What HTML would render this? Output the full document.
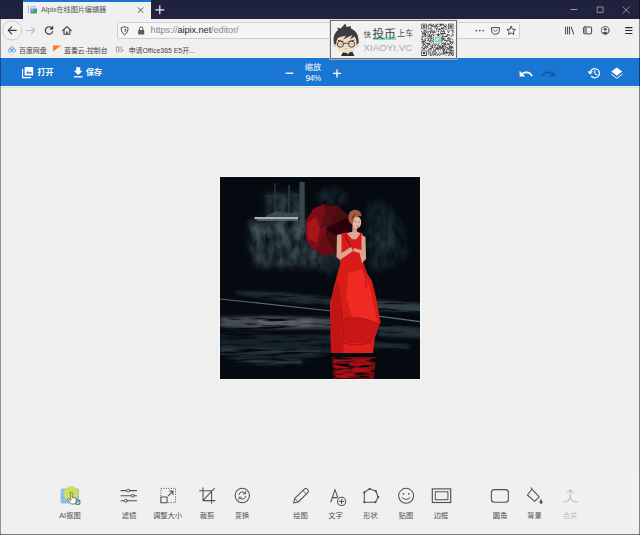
<!DOCTYPE html>
<html lang="zh-CN">
<head>
<meta charset="utf-8">
<title>AIpix在线图片编辑器</title>
<style>
*{box-sizing:border-box;margin:0;padding:0}
html,body{width:640px;height:535px;overflow:hidden;background:#f0f0f0}
body{font-family:"Liberation Sans","Noto Sans CJK SC",sans-serif;color:#333;position:relative}
.abs{position:absolute}
#win{position:absolute;left:0;top:0;width:640px;height:535px;background:#f0f0f0;overflow:hidden}
/* window frame */
#titlebar{left:0;top:0;width:640px;height:18.7px;background:#20223f}
#topline{left:0;top:0;width:640px;height:1px;background:#0d2a2e}
#tab{left:23px;top:0;width:127.5px;height:19px;background:#f0f0f0}
#tabline{left:23px;top:0;width:127.5px;height:1.5px;background:#1a73d9}
#tabtitle{left:41px;top:5px;font-size:7.2px;line-height:10px;color:#555;white-space:nowrap;letter-spacing:-0.1px}
#navbar{left:0;top:18.5px;width:640px;height:23.5px;background:#f0f0f0}
#urlbar{left:116.5px;top:22.2px;width:403px;height:16.8px;background:#f5f5f5;border:1px solid #cfcfd2;border-radius:1.5px}
#url{left:150.6px;top:24.4px;font-size:9.3px;line-height:12px;color:#8a8a8e;white-space:nowrap;letter-spacing:-0.12px}
#url b{font-weight:normal;color:#2a2a2e}
#bookmarks{left:0;top:42px;width:640px;height:16.5px;background:#f0f0f0}
.bm{font-size:6.9px;line-height:10px;color:#444;white-space:nowrap;top:45.5px}
/* app */
#appbar{left:0;top:58.2px;width:640px;height:28.2px;background:#1976d2}
.wt{color:#fff;font-weight:bold;font-size:8px;line-height:10px;white-space:nowrap}
#canvas{left:0;top:86.5px;width:640px;height:384px;background:#efefef}
#tools{left:0;top:470.5px;width:640px;height:63px;background:#f0f0f0}
.lbl{font-size:7.3px;line-height:10px;color:#505056;white-space:nowrap;top:510.8px;width:60px;text-align:center}
#bborder{left:0;top:533.7px;width:640px;height:1.3px;background:#7c7c7c}
#lborder{left:0;top:18.5px;width:1px;height:517px;background:rgba(20,10,30,.42)}
#rborder{left:639px;top:0;width:1px;height:535px;background:rgba(0,0,0,.45)}
svg{position:absolute;overflow:visible}
</style>
</head>
<body>
<div id="win">
<div id="titlebar" class="abs"></div>
<div id="topline" class="abs"></div>
<div id="tab" class="abs"></div>
<div id="tabline" class="abs"></div>
<div id="tabtitle" class="abs">AIpix在线图片编辑器</div>
<div id="navbar" class="abs"></div>
<div id="urlbar" class="abs"></div>
<div id="url" class="abs">https://<b>aipix.net</b>/editor/</div>
<div id="bookmarks" class="abs"></div>
<div class="abs bm" style="left:19px">百度网盘</div>
<div class="abs bm" style="left:64px">蓝奏云-控制台</div>
<div class="abs bm" style="left:128.7px">申请Office365 E5开...</div>
<!-- CHROME-START -->
<svg id="chromeicons" style="left:0;top:0" width="640" height="60" viewBox="0 0 640 60" fill="none" stroke-linecap="round" stroke-linejoin="round">
<!-- favicon -->
<g>
<rect x="30.5" y="8.5" width="6.5" height="4.8" fill="#3f8fd8" stroke="none"/>
<path d="M30.5 13.3 L33 11 L34.5 12 L37 10.5 L37 13.3Z" fill="#49b04a" stroke="none"/>
<rect x="31.5" y="9.3" width="1.6" height="1.4" fill="#f5d040" stroke="none"/>
<path d="M28.5 6.5 V13" stroke="#8a93c8" stroke-width="0.8" stroke-dasharray="1 1"/>
<path d="M30.5 6.8 H36" stroke="#8a93c8" stroke-width="0.8" stroke-dasharray="1 1"/>
</g>
<!-- tab close -->
<path d="M138.2 7.7 L143 12.5 M143 7.7 L138.2 12.5" stroke="#4a4a50" stroke-width="0.9"/>
<!-- new tab plus -->
<path d="M155.8 9.8 H163.8 M159.8 5.8 V13.8" stroke="#f0f0f4" stroke-width="1.2"/>
<!-- window controls -->
<path d="M571 9.5 H577" stroke="#a6a6ae" stroke-width="0.9"/>
<rect x="597.6" y="7" width="5.4" height="5.4" stroke="#9c9c98" stroke-width="0.9"/>
<path d="M623 6.8 L629.4 13.2 M629.4 6.8 L623 13.2" stroke="#b0b0ba" stroke-width="0.75"/>
<!-- back -->
<circle cx="12.2" cy="30.4" r="9.6" stroke="#c4c0c8" stroke-width="0.8" fill="#f2f2f2"/>
<path d="M16.2 30.4 H8.4 M11.6 27 L8.2 30.4 L11.6 33.8" stroke="#3a3a40" stroke-width="1.15"/>
<!-- forward -->
<path d="M26.6 30.4 H34.4 M31.2 27 L34.6 30.4 L31.2 33.8" stroke="#b9b6be" stroke-width="1.05"/>
<!-- reload -->
<path d="M52.3 28.6 A3.7 3.7 0 1 0 52.6 31.6" stroke="#3a3a40" stroke-width="1.15"/>
<path d="M52.9 26.4 V29.2 H50.1Z" fill="#3a3a40" stroke="#3a3a40" stroke-width="0.6"/>
<!-- home -->
<path d="M62.6 30.6 L66.9 26.6 L71.2 30.6" stroke="#3a3a40" stroke-width="1.15"/>
<path d="M64 30 V34.3 H69.8 V30" stroke="#3a3a40" stroke-width="1.1"/>
<rect x="66.2" y="31.6" width="1.5" height="2.6" fill="#3a3a40" stroke="none"/>
<!-- shield -->
<path d="M124.6 26.6 C123 27.4 122 27.5 121.2 27.5 C121.2 31 122 33.4 124.6 34.8 C127.2 33.4 128 31 128 27.5 C127.2 27.5 126.2 27.4 124.6 26.6Z" stroke="#4a4a50" stroke-width="0.95"/>
<path d="M124.6 28.6 V32.6 C125.8 31.8 126.3 30.4 126.3 28.9Z" fill="#6a6a70" stroke="none"/>
<!-- lock -->
<rect x="138.2" y="30" width="6" height="4.6" rx="0.5" fill="#5a5a60" stroke="none"/>
<path d="M139.5 30 V28.6 A1.7 1.7 0 0 1 142.9 28.6 V30" stroke="#5a5a60" stroke-width="1"/>
<!-- dots -->
<circle cx="476.4" cy="30.6" r="0.85" fill="#4a4a50"/><circle cx="479.8" cy="30.6" r="0.85" fill="#4a4a50"/><circle cx="483.2" cy="30.6" r="0.85" fill="#4a4a50"/>
<!-- pocket -->
<path d="M491.6 27.6 H499.4 V30.4 A3.9 3.9 0 0 1 491.6 30.4Z" stroke="#4a4a50" stroke-width="1"/>
<path d="M493.6 29.8 L495.5 31.6 L497.4 29.8" stroke="#4a4a50" stroke-width="0.9"/>
<!-- star -->
<path d="M511.2 26.4 L512.5 29.2 L515.5 29.5 L513.3 31.5 L513.9 34.5 L511.2 33 L508.5 34.5 L509.1 31.5 L506.9 29.5 L509.9 29.2Z" stroke="#3a3a40" stroke-width="0.9"/>
<!-- library -->
<path d="M565.6 27 V34 M567.6 27 V34 M569.6 27 V34 M571.4 27.3 L573.6 34" stroke="#3a3a40" stroke-width="0.95"/>
<!-- sidebar -->
<rect x="583.6" y="27" width="8" height="6.8" rx="0.8" stroke="#3a3a40" stroke-width="0.95"/>
<rect x="584.3" y="27.6" width="2.6" height="5.6" fill="#8a8a90" stroke="none"/>
<!-- account -->
<circle cx="605.2" cy="30.4" r="3.9" stroke="#4a4a50" stroke-width="0.9"/>
<circle cx="605.2" cy="29.3" r="1.4" fill="#4a4a50" stroke="none"/>
<path d="M602.6 33 A2.8 2 0 0 1 607.8 33 A3.9 3.9 0 0 1 602.6 33Z" fill="#4a4a50" stroke="none"/>
<!-- menu -->
<path d="M625.6 27.6 H632 M625.6 30.5 H632 M625.6 33.4 H632" stroke="#2a2a30" stroke-width="1.05"/>
<!-- bookmarks icons -->
<g>
<circle cx="9.9" cy="50.6" r="1.7" stroke="#4ab0f4" stroke-width="1"/>
<circle cx="13.7" cy="50.6" r="1.7" stroke="#4ab0f4" stroke-width="1"/>
<circle cx="11.8" cy="48.4" r="1.7" stroke="#4ab0f4" stroke-width="1"/>
<circle cx="11.8" cy="49.6" r="0.9" fill="#ee6a6a" stroke="none"/>
<path d="M10.6 54.5 H13" stroke="#f0a0b0" stroke-width="0.6"/>
</g>
<path d="M53 45.6 H61.2 L53 51.6Z" fill="#ff7a1a" stroke="none"/>
<path d="M59.5 46.2 L61.6 45.4 L61.6 48" fill="#ffd9b8" stroke="none"/>
<g stroke="#8a8a98" stroke-width="0.7">
<rect x="116.4" y="47" width="2.4" height="5" rx="0.6"/>
<circle cx="121.3" cy="50.4" r="1.6"/>
<path d="M119.6 47.2 H122"/>
</g>
</svg>
<!-- CHROME-END -->
<div id="appbar" class="abs"></div>
<div class="abs wt" style="left:37.5px;top:67.5px">打开</div>
<div class="abs wt" style="left:86px;top:67.5px">保存</div>
<div class="abs wt" style="left:293px;top:62.7px;width:40px;text-align:center;font-size:8.2px;font-weight:normal">缩放</div>
<div class="abs wt" style="left:293px;top:72.7px;width:40px;text-align:center;font-size:8.3px;font-weight:normal;letter-spacing:-0.5px">94%</div>
<!-- APPBAR-START -->
<svg id="appicons" style="left:0;top:58px" width="640" height="30" viewBox="0 58 640 30" fill="none" stroke-linecap="round" stroke-linejoin="round">
<!-- open (photo library) -->
<rect x="24.6" y="67" width="8.6" height="8.6" rx="0.9" fill="#fff"/>
<path d="M26 73.6 L28 71 L29.5 72.8 L30.6 71.6 L32.2 73.6Z" fill="#1976d2"/>
<path d="M22.6 69 V77.6 H31.2" stroke="#fff" stroke-width="1.1" stroke-linecap="butt" stroke-linejoin="miter"/>
<!-- save (download) -->
<path d="M76.2 67.2 H80.2 V70.8 H82.6 L78.2 75 L73.8 70.8 H76.2Z" fill="#fff"/>
<rect x="73.8" y="76.2" width="8.8" height="1.3" fill="#fff"/>
<!-- minus / plus -->
<path d="M285.6 73.2 H293.4" stroke="#fff" stroke-width="1.3" stroke-linecap="butt"/>
<path d="M333 73.4 H341 M337 69.4 V77.4" stroke="#fff" stroke-width="1.3" stroke-linecap="butt"/>
<!-- undo -->
<path d="M520.4 71 L524 70.9 M520.4 71 L520.5 67.6" stroke="none"/>
<path d="M526.6 71.4 C524.6 71.4 523 72 521.8 73 L519.6 70.8 V76.4 H525.2 L523.1 74.3 C524 73.6 525.2 73.2 526.6 73.2 C528.8 73.2 530.4 74.4 531.2 76.4 L532.8 75.9 C531.8 73.2 529.6 71.4 526.6 71.4Z" fill="#fff"/>
<!-- redo -->
<path d="M547.8 71.4 C549.8 71.4 551.4 72 552.6 73 L554.8 70.8 V76.4 H549.2 L551.3 74.3 C550.4 73.6 549.2 73.2 547.8 73.2 C545.6 73.2 544 74.4 543.2 76.4 L541.6 75.9 C542.6 73.2 544.8 71.4 547.8 71.4Z" fill="#1558a6"/>
<!-- history -->
<path d="M590.2 73.2 A4.6 4.6 0 1 1 591.6 76.5" stroke="#fff" stroke-width="1.25"/>
<path d="M588 71.8 L590.2 74.4 L592.4 71.8Z" fill="#fff" stroke="#fff" stroke-width="0.4"/>
<path d="M594.8 70.6 V73.6 L597 74.9" stroke="#fff" stroke-width="1.05"/>
<!-- layers -->
<path d="M616.8 67.4 L622.2 71.6 L616.8 75.8 L611.4 71.6Z" fill="#fff"/>
<path d="M611.4 74.2 L616.8 78.4 L622.2 74.2" stroke="#fff" stroke-width="1" stroke-linejoin="miter"/>
</svg>
<!-- APPBAR-END -->
<div id="canvas" class="abs"></div>
<!-- PHOTO-START -->
<div id="photoframe" class="abs" style="left:219px;top:176px;width:202px;height:204px;background:#f9f9f9"></div>
<svg id="photo" style="left:220px;top:177px" width="200" height="202" viewBox="0 0 200 202">
<defs>
<filter id="b1" x="-30%" y="-30%" width="160%" height="160%"><feGaussianBlur stdDeviation="0.9"/></filter>
<filter id="b2" x="-30%" y="-30%" width="160%" height="160%"><feGaussianBlur stdDeviation="2.2"/></filter>
<filter id="b5" x="-30%" y="-30%" width="160%" height="160%"><feGaussianBlur stdDeviation="5"/></filter>
<filter id="b05" x="-30%" y="-30%" width="160%" height="160%"><feGaussianBlur stdDeviation="0.45"/></filter>
<filter id="mw" x="-20%" y="-20%" width="140%" height="140%"><feGaussianBlur in="SourceGraphic" stdDeviation="3.5" result="bl"/><feTurbulence type="fractalNoise" baseFrequency="0.12 0.07" numOctaves="3" seed="4" result="n"/><feColorMatrix in="n" type="matrix" values="0 0 0 0 0  0 0 0 0 0  0 0 0 0 0  0 0 0 1.8 -0.2" result="na"/><feComposite in="bl" in2="na" operator="in"/></filter>
<filter id="mg" x="-20%" y="-20%" width="140%" height="140%"><feGaussianBlur in="SourceGraphic" stdDeviation="1.6" result="bl"/><feTurbulence type="fractalNoise" baseFrequency="0.025 0.32" numOctaves="3" seed="9" result="n"/><feColorMatrix in="n" type="matrix" values="0 0 0 0 0  0 0 0 0 0  0 0 0 0 0  0 0 0 4 -1.05" result="na"/><feComposite in="bl" in2="na" operator="in"/></filter>
<filter id="mr" x="-20%" y="-20%" width="140%" height="140%"><feGaussianBlur in="SourceGraphic" stdDeviation="0.7" result="bl"/><feTurbulence type="fractalNoise" baseFrequency="0.06 0.35" numOctaves="2" seed="5" result="n"/><feColorMatrix in="n" type="matrix" values="0 0 0 0 0  0 0 0 0 0  0 0 0 0 0  0 0 0 5 -1.7" result="na"/><feComposite in="bl" in2="na" operator="in"/></filter>
<clipPath id="pc"><rect x="0" y="0" width="200" height="202"/></clipPath>
</defs>
<g clip-path="url(#pc)">
<rect x="0" y="0" width="200" height="202" fill="#040a0f"/>
<!-- wall -->
<g filter="url(#mw)">
<rect x="30" y="44" width="76" height="30" fill="#43535a"/>
<rect x="34" y="60" width="84" height="30" fill="#33424a"/>
<rect x="46" y="16" width="36" height="26" fill="#2a3940"/>
<ellipse cx="112" cy="20" rx="14" ry="8" fill="#1c2b32"/>
</g>
<g filter="url(#mw)">
<path d="M150 22 L170 30 L184 52 L186 80 L170 88 L152 96 L146 70 L148 40Z" fill="#17272e"/>
<path d="M152 40 L166 44 L176 62 L168 76 L154 70Z" fill="#1d3038"/>
<path d="M100 80 L118 80 L116 100 L100 96Z" fill="#141f26"/>
</g>
<!-- window -->
<g filter="url(#b05)">
<rect x="54.2" y="6.5" width="1.3" height="34" fill="#2c3a41"/>
<rect x="68.3" y="8" width="1.5" height="33" fill="#2f3e45"/>
<rect x="79.5" y="5" width="5.2" height="46" fill="#38464c"/>
<rect x="46" y="18.5" width="10" height="1" fill="#2a383e"/>
<rect x="70" y="17.5" width="10" height="1" fill="#2a383e"/>
<path d="M46 39 L56 34 L68 36 L79 35 L79 40 L46 40Z" fill="#3a484e"/>
<rect x="34.5" y="40" width="43.5" height="2.2" fill="#a9b2b3"/>
<rect x="37" y="42.2" width="41" height="1.6" fill="#56656a"/>
</g>
<!-- ground -->
<g filter="url(#mg)">
<path d="M16 114 L60 115 L112 121 L112 130 L60 124 L16 117Z" fill="#222d33"/>
<path d="M0 140 L40 139 L112 141 L112 152 L40 152 L0 150Z" fill="#444c52"/>
<path d="M38 141 L92 142 L92 149 L38 149Z" fill="#5a6166"/>
<path d="M0 156 L112 158 L112 176 L60 190 L20 186 L0 178Z" fill="#19232a"/>
<path d="M0 171 L100 174 L100 177 L0 175Z" fill="#2d393f"/>
<path d="M18 181 L82 183 L82 188 L18 186Z" fill="#25323a"/>
<path d="M155 123 L204 127 L204 136 L155 133Z" fill="#333f45"/>
<path d="M158 147 L204 151 L204 161 L158 159Z" fill="#273238"/>
<path d="M152 165 L190 167.5 L190 172.5 L152 171Z" fill="#222d33"/>
</g>
<g filter="url(#b05)">
<path d="M0 121.4 L112 133.4 L112 134.5 L0 122.5Z" fill="#5c676e"/>
<path d="M158 138.6 L200 144.1 L200 145.2 L158 139.7Z" fill="#626d74"/>
</g>
<!-- umbrella -->
<g filter="url(#b05)">
<path d="M86 44 L93 32 L104 27 L118 29 L128 38 L131 52 L128 66 L118 76 L104 78 L92 72 L86 62Z" fill="#480710"/>
<path d="M86 44 L93 32 L104 27 L108 40 L106 52 L104 78 L92 72 L86 62Z" fill="#7c0d17"/>
<path d="M87 46 L96 40 L100 52 L97 66 L88 62Z" fill="#a8141d"/>
<path d="M100 52 L106 30 L118 30 L112 46Z" fill="#5a0912"/>
<path d="M106 52 L128 40 L131 52 L128 66Z" fill="#2c0409"/>
<path d="M96 74 L104 56 L116 76 L104 79Z" fill="#650a13"/>
</g>
<!-- figure -->
<g filter="url(#b05)">
<!-- reflection -->
<g filter="url(#mr)"><path d="M112 180 L156 180 L154 202 L113 202Z" fill="#7a0a0e"/>
<path d="M114 183 L150 182 L152 194 L138 196 L128 202 L116 200Z" fill="#b01014"/></g>
<!-- skirt -->
<path d="M121 84 L143 84 L147 96 L152 104 L156 120 L160.5 145 L155 160 L153 176 L111 176 L110.5 150 L110 126 L116 102Z" fill="#d81b18"/>
<path d="M128 96 L142 92 L150 110 L154 130 L158 146 L146 142 L132 140 L126 120Z" fill="#ee2a21"/>
<path d="M124 142 L146 142 L159 148 L155 160 L150 166 L130 168 L122 160Z" fill="#c91614"/>
<path d="M124 166 L150 166 L153 176 L122 176Z" fill="#e0201b"/>
<path d="M110.5 150 L112 120 L118 104 L122 130 L121 176 L111 176Z" fill="#c21513"/>
<path d="M121 130 L123.4 150 L122.4 176" stroke="#9c100f" stroke-width="0.8" fill="none"/>
<path d="M124 142 Q140 138 159 147" stroke="#a81210" stroke-width="0.9" fill="none"/>
<path d="M124 166 Q138 170 151 165" stroke="#a81210" stroke-width="0.8" fill="none"/>
<path d="M143 88 Q147 100 146 112" stroke="#a81210" stroke-width="0.8" fill="none"/>
<!-- bodice -->
<path d="M121.4 56.4 L127 55.6 L140.4 55.6 L143 56.4 L144 70 L143 86 L120 86 L120.5 70Z" fill="#d81e1b"/>
<!-- arms -->
<path d="M117 58 L121.5 57 L121.5 76 L131 70 L133 74 L120 83 L116.5 80Z" fill="#dba68e"/>
<path d="M141.5 58 L145.5 60 L146 82 L142 86 L139.5 76 L133 74 L134 71 L141.5 73Z" fill="#d9a48c"/>
<!-- neck, head -->
<rect x="132.4" y="49" width="4.6" height="7" fill="#cf9a84"/>
<path d="M127 56.6 L132.4 54.4 L137 54.4 L140.4 56.6 L136.4 62.2 L132 62.2Z" fill="#dba890"/>
<ellipse cx="129.6" cy="40.6" rx="2.6" ry="3" fill="#2a1716"/>
<ellipse cx="136.6" cy="45.4" rx="4.6" ry="6.2" fill="#e4b6a0"/>
<path d="M128.4 40.6 Q128.6 32.6 135.6 32.8 Q141.6 33.4 141.4 39.6 Q138 37.6 134.6 40.2 Q133.6 44.6 132.2 47.4 Q128.6 46 128.4 40.6Z" fill="#a25a3c"/>
<path d="M132.2 41 Q133 37.4 136 36.6 Q133.6 38.8 133.4 42Z" fill="#6e3322"/>
<circle cx="135.6" cy="44.8" r="0.55" fill="#5a382e"/><circle cx="139.2" cy="45" r="0.55" fill="#5a382e"/>
<rect x="136.6" y="49.2" width="2" height="0.8" fill="#b8443c"/>
<path d="M124.6 58 L131 70" stroke="#5a0a0e" stroke-width="0.8" fill="none"/>
</g>
</g>
</svg>
<!-- PHOTO-END -->
<div id="tools" class="abs"></div>
<div class="abs" style="left:1px;top:86.6px;width:638px;height:0.8px;background:rgba(120,90,140,.12)"></div>
<div class="abs lbl" style="left:40px">AI抠图</div>
<div class="abs lbl" style="left:99px">滤镜</div>
<div class="abs lbl" style="left:137.5px">调整大小</div>
<div class="abs lbl" style="left:177px">裁剪</div>
<div class="abs lbl" style="left:212px">变换</div>
<div class="abs lbl" style="left:270.5px">绘图</div>
<div class="abs lbl" style="left:305.5px">文字</div>
<div class="abs lbl" style="left:340.5px">形状</div>
<div class="abs lbl" style="left:376px">贴图</div>
<div class="abs lbl" style="left:411px">边框</div>
<div class="abs lbl" style="left:470px">圆角</div>
<div class="abs lbl" style="left:504.5px">背景</div>
<div class="abs lbl" style="left:540px;color:#bbb">合并</div>
<!-- TOOL-START -->
<svg id="toolicons" style="left:0;top:480px" width="640" height="30" viewBox="0 480 640 30" fill="none" stroke="#505058" stroke-width="1" stroke-linecap="round" stroke-linejoin="round">
<!-- AI cutout -->
<rect x="60.6" y="488.6" width="18.4" height="14.8" rx="1.6" fill="#8cbfe6" stroke="none"/>
<circle cx="77.7" cy="502.2" r="2.3" fill="none" stroke="#3f9a3a" stroke-width="1.2"/>
<circle cx="71" cy="493.4" r="7.4" fill="#cfe05a" fill-opacity="0.92" stroke="none"/>
<path d="M70.6 492.4 h1.5 v5 l3.2 0.6 q1.2 0.4 1 1.8 l-0.5 3 q-0.3 1.2 -1.6 1.2 h-2.4 q-1 0 -1.7 -1 l-2.6 -3.6 q0.7 -1 1.8 -0.2 l1.3 1Z" fill="#fff" stroke="#44444a" stroke-width="0.7"/>
<rect x="70.8" y="492.6" width="1.2" height="4.6" fill="#e8d84a" stroke="none"/>
<!-- filter -->
<path d="M121 490.6 H136.6 M121 495.7 H136.6 M121 500.8 H136.6" stroke-width="1.05"/>
<circle cx="128.2" cy="490.6" r="1.5" fill="#f0f0f0" stroke-width="0.9"/>
<circle cx="132.8" cy="495.7" r="1.5" fill="#f0f0f0" stroke-width="0.9"/>
<circle cx="125.8" cy="500.8" r="1.5" fill="#f0f0f0" stroke-width="0.9"/>
<!-- resize -->
<rect x="160.9" y="488.4" width="14.6" height="14.2" stroke-dasharray="1 1.5" stroke-linecap="butt" stroke-width="1"/>
<rect x="160.9" y="496.9" width="6.2" height="5.8" fill="#f0f0f0" stroke-width="1.05"/>
<path d="M168.2 495.8 L172.8 491.2 M169.4 491 H173 V494.6" stroke-width="1.05"/>
<!-- crop -->
<path d="M203 487.8 V500.6 H215 M199.6 490.7 H211.6 V503.2 M203.4 500.2 L214.4 488.3" stroke-width="1.05"/>
<!-- transform -->
<circle cx="242.3" cy="495.5" r="7.2" stroke-width="1.05"/>
<path d="M239 494.6 A3.4 3.4 0 0 1 245.2 493.4 M245.6 496.4 A3.4 3.4 0 0 1 239.4 497.6" stroke-width="1"/>
<path d="M245.6 491.6 V493.8 H243.4 M239 499.4 V497.2 H241.2" stroke-width="0.9"/>
<!-- pencil -->
<path d="M293.6 503 L294.8 498.4 L304.6 488.8 Q305.8 487.8 307 489 L308 490 Q309 491.2 308 492.4 L298.2 502 Z" stroke-width="1.05"/>
<path d="M294.8 498.6 L298 501.8 M303 490.6 L306.2 493.8" stroke-width="0.9"/>
<!-- text -->
<path d="M330.8 502 L335 489.6 L337.6 497.2 M332.4 497.6 H337" stroke-width="1.05"/>
<circle cx="341.6" cy="501.4" r="4.1" fill="#f0f0f0" stroke-width="1.05"/>
<path d="M339.4 501.4 H343.8 M341.6 499.2 V503.6" stroke-width="1"/>
<!-- shape -->
<path d="M369.7 488.8 L375.9 491.2 L378.2 497.2 L375.4 502.2 L364.3 502.2 L364.3 492.4Z" stroke-width="1.05"/>
<g fill="#505058" stroke="none"><circle cx="369.7" cy="488.8" r="1.1"/><circle cx="375.9" cy="491.2" r="1.1"/><circle cx="378.2" cy="497.2" r="1.1"/><circle cx="375.4" cy="502.2" r="1.1"/><circle cx="364.3" cy="502.2" r="1.1"/><circle cx="364.3" cy="492.4" r="1.1"/></g>
<!-- sticker -->
<circle cx="406.1" cy="495.8" r="7.5" stroke-width="1.05"/>
<circle cx="403.5" cy="493.8" r="0.85" fill="#505058" stroke="none"/><circle cx="408.8" cy="493.8" r="0.85" fill="#505058" stroke="none"/>
<path d="M402.2 497.6 Q406.1 501.6 410 497.6" stroke-width="1"/>
<!-- frame -->
<rect x="432.3" y="488.9" width="18.4" height="13.6" stroke-width="1.15" stroke-linejoin="miter"/>
<rect x="435.3" y="491.8" width="12.6" height="7.9" stroke-width="1" stroke-linejoin="miter"/>
<!-- rounded -->
<rect x="491.4" y="489.6" width="17" height="12.6" rx="3" stroke-width="1.1"/>
<!-- bucket -->
<path d="M531.9 489.2 L539.2 496.8 L534.6 501.4 L527.4 495 Z M531.2 487.8 L532.4 489.8" stroke-width="1.05"/>
<path d="M541 499.6 Q542.6 501.6 542.4 502.2 A1.4 1.4 0 0 1 539.6 502.2 Q539.6 501.4 541 499.6Z" fill="#505058" stroke-width="0.4"/>
<!-- merge -->
<path d="M570.2 489.8 V495.4 C570.2 499.6 568 501.8 563.4 501.9 M570.2 495.4 C570.2 499.6 572.6 501.8 577.4 501.9 M566.8 493 L570.2 489.6 L573.6 493" stroke="#c3bfcb" stroke-width="1.05"/>
</svg>
<!-- TOOL-END -->
<!-- BANNER-START -->
<div id="banner" class="abs" style="left:329.5px;top:20px;width:127.5px;height:38.5px;background:#f1f1f1;border:1px solid #6e6e72;box-shadow:0 0 0 0.6px #d8d8dc"></div>
<svg id="avatar" style="left:330px;top:20px" width="127" height="39" viewBox="330 20 127 39">
<!-- avatar -->
<path d="M341 56 L343.5 51 L352 51 L354.5 56Z" fill="#2f2f33"/>
<path d="M345.6 51 L347.8 54.4 L350 51Z" fill="#f4f4f4"/>
<ellipse cx="334.6" cy="44.8" rx="1.7" ry="2.4" fill="#efd3b8"/>
<ellipse cx="357.4" cy="44.8" rx="1.7" ry="2.4" fill="#efd3b8"/>
<path d="M336 38 Q336 33 346 33 Q356.4 33 356.4 38 L356.4 45 Q356 52.6 346.2 53 Q336.4 52.6 336 45Z" fill="#f3dcc4"/>
<path d="M333.6 41 Q333 34 338 30 L337.4 27.6 L340.6 28.6 L345.4 23.6 L346.6 27 L350.6 26 L351 28.4 Q358 31 358.6 40 L358.8 43 L356.4 44.6 Q356.8 39 354.6 36.4 L350 39.4 L352.4 35 L343 39.6 L346 35.6 L338.6 37.6 Q336 40 336.2 45 L334 43.4Z" fill="#3e3e42"/>
<path d="M338 40.4 L343.4 41.6 M348.4 41.6 L354.4 40.2" stroke="#37373b" stroke-width="0.9" fill="none"/>
<circle cx="340.4" cy="44.2" r="3" fill="#f7e8d6" stroke="#3a3a3e" stroke-width="1"/>
<circle cx="351.6" cy="44.2" r="3" fill="#f7e8d6" stroke="#3a3a3e" stroke-width="1"/>
<path d="M343.4 43.6 Q346 42.6 348.6 43.6" stroke="#3a3a3e" stroke-width="0.9" fill="none"/>
<path d="M338.8 44.6 Q340.4 43.2 342 44.6 M350 44.6 Q351.6 43.2 353.2 44.6" stroke="#6a5a50" stroke-width="0.6" fill="none"/>
<path d="M345.2 48.4 Q346.2 49.2 347.2 48.4" stroke="#b08a78" stroke-width="0.6" fill="none"/>
<!-- underline -->
<rect x="373" y="37.2" width="23" height="2.8" fill="#86dcae"/>
<!-- qr -->
<rect x="421" y="23.6" width="32.8" height="32.2" fill="#f4f4f4"/>
<g transform="translate(421.3 23.7) scale(0.7854)"><path fill="#46464c" d="M0 0h7v1h-7zM10 0h3v1h-3zM15 0h1v1h-1zM20 0h2v1h-2zM23 0h6v1h-6zM34 0h7v1h-7zM0 1h1v1h-1zM6 1h1v1h-1zM9 1h2v1h-2zM12 1h1v1h-1zM14 1h2v1h-2zM18 1h3v1h-3zM23 1h4v1h-4zM28 1h1v1h-1zM30 1h2v1h-2zM34 1h1v1h-1zM40 1h1v1h-1zM0 2h1v1h-1zM2 2h3v1h-3zM6 2h1v1h-1zM8 2h2v1h-2zM11 2h4v1h-4zM16 2h1v1h-1zM18 2h2v1h-2zM24 2h2v1h-2zM28 2h2v1h-2zM32 2h1v1h-1zM34 2h1v1h-1zM36 2h3v1h-3zM40 2h1v1h-1zM0 3h1v1h-1zM2 3h3v1h-3zM6 3h1v1h-1zM8 3h1v1h-1zM12 3h1v1h-1zM14 3h7v1h-7zM22 3h2v1h-2zM29 3h3v1h-3zM34 3h1v1h-1zM36 3h3v1h-3zM40 3h1v1h-1zM0 4h1v1h-1zM2 4h3v1h-3zM6 4h1v1h-1zM8 4h1v1h-1zM12 4h1v1h-1zM17 4h1v1h-1zM20 4h1v1h-1zM25 4h1v1h-1zM28 4h1v1h-1zM30 4h1v1h-1zM32 4h1v1h-1zM34 4h1v1h-1zM36 4h3v1h-3zM40 4h1v1h-1zM0 5h1v1h-1zM6 5h1v1h-1zM9 5h1v1h-1zM11 5h2v1h-2zM16 5h1v1h-1zM18 5h2v1h-2zM25 5h6v1h-6zM34 5h1v1h-1zM40 5h1v1h-1zM0 6h7v1h-7zM9 6h3v1h-3zM13 6h1v1h-1zM19 6h5v1h-5zM25 6h3v1h-3zM32 6h1v1h-1zM34 6h7v1h-7zM8 7h1v1h-1zM13 7h1v1h-1zM19 7h1v1h-1zM22 7h3v1h-3zM28 7h1v1h-1zM30 7h1v1h-1zM32 7h1v1h-1zM3 8h2v1h-2zM6 8h1v1h-1zM12 8h2v1h-2zM16 8h1v1h-1zM21 8h1v1h-1zM25 8h1v1h-1zM28 8h1v1h-1zM33 8h1v1h-1zM35 8h1v1h-1zM38 8h3v1h-3zM0 9h1v1h-1zM3 9h3v1h-3zM8 9h1v1h-1zM10 9h3v1h-3zM14 9h2v1h-2zM17 9h1v1h-1zM19 9h1v1h-1zM21 9h2v1h-2zM24 9h3v1h-3zM28 9h2v1h-2zM36 9h1v1h-1zM40 9h1v1h-1zM0 10h1v1h-1zM2 10h1v1h-1zM5 10h2v1h-2zM8 10h2v1h-2zM11 10h1v1h-1zM13 10h2v1h-2zM16 10h2v1h-2zM21 10h1v1h-1zM26 10h4v1h-4zM33 10h3v1h-3zM39 10h2v1h-2zM1 11h1v1h-1zM3 11h2v1h-2zM6 11h1v1h-1zM8 11h1v1h-1zM11 11h2v1h-2zM14 11h3v1h-3zM18 11h1v1h-1zM24 11h1v1h-1zM29 11h1v1h-1zM34 11h1v1h-1zM40 11h1v1h-1zM1 12h5v1h-5zM8 12h1v1h-1zM11 12h1v1h-1zM15 12h1v1h-1zM21 12h1v1h-1zM24 12h7v1h-7zM39 12h1v1h-1zM1 13h1v1h-1zM3 13h3v1h-3zM8 13h1v1h-1zM10 13h1v1h-1zM13 13h2v1h-2zM17 13h1v1h-1zM19 13h5v1h-5zM25 13h1v1h-1zM28 13h1v1h-1zM31 13h1v1h-1zM33 13h2v1h-2zM36 13h1v1h-1zM40 13h1v1h-1zM3 14h1v1h-1zM5 14h3v1h-3zM9 14h2v1h-2zM12 14h2v1h-2zM15 14h1v1h-1zM21 14h2v1h-2zM26 14h2v1h-2zM33 14h2v1h-2zM38 14h3v1h-3zM0 15h1v1h-1zM2 15h1v1h-1zM4 15h2v1h-2zM9 15h4v1h-4zM15 15h2v1h-2zM20 15h3v1h-3zM24 15h1v1h-1zM27 15h1v1h-1zM31 15h3v1h-3zM35 15h2v1h-2zM40 15h1v1h-1zM1 16h2v1h-2zM4 16h2v1h-2zM8 16h3v1h-3zM12 16h2v1h-2zM26 16h7v1h-7zM38 16h1v1h-1zM0 17h2v1h-2zM8 17h1v1h-1zM11 17h2v1h-2zM15 17h1v1h-1zM25 17h2v1h-2zM34 17h1v1h-1zM5 18h3v1h-3zM10 18h5v1h-5zM26 18h5v1h-5zM33 18h4v1h-4zM38 18h1v1h-1zM0 19h2v1h-2zM4 19h1v1h-1zM8 19h2v1h-2zM12 19h1v1h-1zM15 19h1v1h-1zM25 19h4v1h-4zM33 19h1v1h-1zM35 19h1v1h-1zM37 19h1v1h-1zM0 20h2v1h-2zM3 20h1v1h-1zM5 20h1v1h-1zM9 20h1v1h-1zM11 20h1v1h-1zM13 20h1v1h-1zM15 20h1v1h-1zM26 20h1v1h-1zM28 20h3v1h-3zM34 20h2v1h-2zM37 20h1v1h-1zM39 20h2v1h-2zM2 21h1v1h-1zM4 21h2v1h-2zM7 21h3v1h-3zM11 21h2v1h-2zM14 21h1v1h-1zM25 21h2v1h-2zM29 21h6v1h-6zM36 21h1v1h-1zM0 22h5v1h-5zM10 22h3v1h-3zM14 22h2v1h-2zM26 22h1v1h-1zM32 22h1v1h-1zM35 22h3v1h-3zM40 22h1v1h-1zM1 23h3v1h-3zM5 23h1v1h-1zM10 23h1v1h-1zM15 23h1v1h-1zM25 23h2v1h-2zM30 23h1v1h-1zM33 23h1v1h-1zM36 23h5v1h-5zM1 24h1v1h-1zM3 24h1v1h-1zM5 24h1v1h-1zM7 24h1v1h-1zM9 24h1v1h-1zM12 24h2v1h-2zM28 24h1v1h-1zM30 24h2v1h-2zM37 24h1v1h-1zM39 24h2v1h-2zM0 25h1v1h-1zM2 25h2v1h-2zM6 25h5v1h-5zM15 25h1v1h-1zM17 25h1v1h-1zM21 25h1v1h-1zM23 25h1v1h-1zM26 25h5v1h-5zM33 25h2v1h-2zM36 25h2v1h-2zM39 25h1v1h-1zM2 26h3v1h-3zM7 26h1v1h-1zM9 26h3v1h-3zM14 26h1v1h-1zM16 26h1v1h-1zM18 26h2v1h-2zM21 26h1v1h-1zM25 26h1v1h-1zM28 26h4v1h-4zM33 26h3v1h-3zM38 26h1v1h-1zM1 27h2v1h-2zM5 27h1v1h-1zM7 27h1v1h-1zM9 27h1v1h-1zM12 27h1v1h-1zM14 27h2v1h-2zM17 27h2v1h-2zM20 27h2v1h-2zM23 27h1v1h-1zM26 27h2v1h-2zM29 27h1v1h-1zM32 27h1v1h-1zM35 27h1v1h-1zM3 28h1v1h-1zM5 28h1v1h-1zM7 28h2v1h-2zM12 28h1v1h-1zM14 28h1v1h-1zM17 28h1v1h-1zM22 28h3v1h-3zM26 28h3v1h-3zM30 28h1v1h-1zM35 28h5v1h-5zM1 29h1v1h-1zM3 29h1v1h-1zM5 29h3v1h-3zM11 29h4v1h-4zM16 29h1v1h-1zM20 29h2v1h-2zM23 29h2v1h-2zM26 29h6v1h-6zM35 29h2v1h-2zM38 29h2v1h-2zM0 30h2v1h-2zM4 30h2v1h-2zM7 30h2v1h-2zM13 30h2v1h-2zM16 30h1v1h-1zM18 30h3v1h-3zM22 30h6v1h-6zM31 30h3v1h-3zM35 30h6v1h-6zM2 31h3v1h-3zM6 31h1v1h-1zM10 31h4v1h-4zM15 31h1v1h-1zM18 31h5v1h-5zM24 31h3v1h-3zM28 31h1v1h-1zM30 31h1v1h-1zM33 31h3v1h-3zM37 31h2v1h-2zM40 31h1v1h-1zM0 32h5v1h-5zM9 32h1v1h-1zM12 32h1v1h-1zM17 32h1v1h-1zM19 32h6v1h-6zM26 32h5v1h-5zM32 32h5v1h-5zM8 33h5v1h-5zM15 33h1v1h-1zM17 33h2v1h-2zM21 33h1v1h-1zM27 33h3v1h-3zM32 33h1v1h-1zM36 33h3v1h-3zM40 33h1v1h-1zM0 34h7v1h-7zM15 34h2v1h-2zM18 34h1v1h-1zM24 34h1v1h-1zM28 34h2v1h-2zM32 34h1v1h-1zM34 34h1v1h-1zM36 34h5v1h-5zM0 35h1v1h-1zM6 35h1v1h-1zM8 35h2v1h-2zM12 35h1v1h-1zM14 35h1v1h-1zM16 35h2v1h-2zM22 35h1v1h-1zM27 35h2v1h-2zM30 35h3v1h-3zM36 35h1v1h-1zM38 35h1v1h-1zM40 35h1v1h-1zM0 36h1v1h-1zM2 36h3v1h-3zM6 36h1v1h-1zM9 36h3v1h-3zM14 36h2v1h-2zM18 36h2v1h-2zM23 36h1v1h-1zM27 36h3v1h-3zM31 36h7v1h-7zM39 36h2v1h-2zM0 37h1v1h-1zM2 37h3v1h-3zM6 37h1v1h-1zM8 37h1v1h-1zM11 37h1v1h-1zM14 37h1v1h-1zM16 37h2v1h-2zM21 37h1v1h-1zM25 37h1v1h-1zM28 37h6v1h-6zM35 37h1v1h-1zM37 37h2v1h-2zM40 37h1v1h-1zM0 38h1v1h-1zM2 38h3v1h-3zM6 38h1v1h-1zM9 38h1v1h-1zM11 38h1v1h-1zM13 38h1v1h-1zM15 38h1v1h-1zM17 38h3v1h-3zM22 38h1v1h-1zM24 38h2v1h-2zM27 38h3v1h-3zM31 38h1v1h-1zM35 38h6v1h-6zM0 39h1v1h-1zM6 39h1v1h-1zM9 39h1v1h-1zM11 39h1v1h-1zM13 39h2v1h-2zM16 39h2v1h-2zM20 39h3v1h-3zM24 39h1v1h-1zM26 39h1v1h-1zM28 39h1v1h-1zM35 39h1v1h-1zM38 39h1v1h-1zM40 39h1v1h-1zM0 40h7v1h-7zM11 40h2v1h-2zM15 40h1v1h-1zM18 40h1v1h-1zM20 40h1v1h-1zM23 40h1v1h-1zM31 40h1v1h-1zM34 40h1v1h-1zM36 40h1v1h-1zM39 40h2v1h-2z"/></g>
<rect x="434.6" y="36.6" width="6.2" height="6" rx="0.6" fill="#7fdcb0"/>
<path d="M436.8 38.2 h1.6 v1.4 h-1.6z M436.8 38.2 v3" stroke="#eafaf2" stroke-width="0.6" fill="none"/>
</svg>
<div class="abs" style="left:363.6px;top:29.5px;font-size:7.4px;line-height:10px;color:#4a4a50;white-space:nowrap">快</div>
<div class="abs" style="left:372.6px;top:26.6px;font-size:11.6px;line-height:14px;color:#404046;white-space:nowrap;font-weight:400">投币</div>
<div class="abs" style="left:397px;top:29.4px;font-size:8.2px;line-height:10px;color:#55555a;white-space:nowrap">上车</div>
<div class="abs" style="left:363.4px;top:42.4px;font-size:9.7px;line-height:12px;color:#aaa8b2;white-space:nowrap;letter-spacing:0.05px">XIAOYI.VC</div>
<!-- BANNER-END -->
<div id="bborder" class="abs"></div>
<div id="lborder" class="abs"></div>
<div id="rborder" class="abs"></div>
</div>
</body>
</html>
